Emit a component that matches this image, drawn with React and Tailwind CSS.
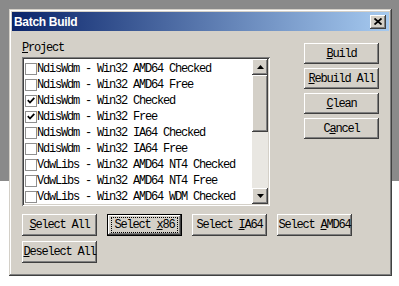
import React from 'react';

const raised =
  'shadow-[inset_-1px_-1px_#404040,inset_1px_1px_#fff,inset_-2px_-2px_#808080,inset_2px_2px_#d4d0c8]';
const sunken =
  'shadow-[inset_1px_1px_#808080,inset_-1px_-1px_#fff,inset_2px_2px_#404040,inset_-2px_-2px_#d4d0c8]';
const mono = "font-['Liberation_Mono',monospace] text-[12px] tracking-[-1.2px]";

const rows = [
  { label: 'NdisWdm - Win32 AMD64 Checked', checked: false },
  { label: 'NdisWdm - Win32 AMD64 Free', checked: false },
  { label: 'NdisWdm - Win32 Checked', checked: true },
  { label: 'NdisWdm - Win32 Free', checked: true },
  { label: 'NdisWdm - Win32 IA64 Checked', checked: false },
  { label: 'NdisWdm - Win32 IA64 Free', checked: false },
  { label: 'VdwLibs - Win32 AMD64 NT4 Checked', checked: false },
  { label: 'VdwLibs - Win32 AMD64 NT4 Free', checked: false },
  { label: 'VdwLibs - Win32 AMD64 WDM Checked', checked: false },
];

const Btn = ({ children, h = 'h-[21px]', isDefault = false }) => (
  <div
    className={`relative flex ${h} w-[75px] shrink-0 items-center justify-center bg-[#d4d0c8] text-black whitespace-pre ${raised} ${mono} ${
      isDefault ? 'border border-black' : ''
    }`}
  >
    {children}
    {isDefault && <div className="absolute inset-x-[3px] inset-y-[2px] border border-dotted border-black" />}
  </div>
);

const U = ({ children }) => <span className="underline underline-offset-[1px]">{children}</span>;

const Check = ({ checked }) => (
  <span className="flex h-[12px] w-[12px] shrink-0 items-center justify-center border border-[#8f8f8f] bg-white">
    {checked && (
      <svg width="8" height="7" viewBox="0 0 8 7">
        <path d="M0.8 3.2 L3 5.5 L7.3 0.9" fill="none" stroke="#000" strokeWidth="1.8" />
      </svg>
    )}
  </span>
);

const Arrow = ({ down }) => (
  <div className={`flex h-[16px] w-[16px] items-center justify-center bg-[#d4d0c8] ${raised}`}>
    <svg width="7" height="4" viewBox="0 0 7 4">
      <path d={down ? 'M0 0 H7 L3.5 4 Z' : 'M0 4 H7 L3.5 0 Z'} fill="#000" />
    </svg>
  </div>
);

export default function App() {
  return (
    <div className="h-[286px] w-[399px] overflow-hidden bg-[linear-gradient(#8a8a8a_0_181px,#fff_181px)] pl-[9px] pt-[9px]">
      <div className="flex h-[267px] w-[383px] flex-col bg-[#d4d0c8] p-[3px] shadow-[inset_-1px_-1px_#404040,inset_1px_1px_#d4d0c8,inset_-2px_-2px_#808080,inset_2px_2px_#fff]">
        {/* title bar */}
        <div className="flex h-[19px] items-center justify-between bg-[linear-gradient(to_right,#0a246a,#a6caf0)] pl-[2px] pr-[3px]">
          <span className="font-['Liberation_Sans',Arial,sans-serif] text-[12px] font-bold tracking-[-0.3px] text-white">
            Batch Build
          </span>
          <div className={`flex h-[14px] w-[16px] items-center justify-center bg-[#d4d0c8] ${raised}`}>
            <svg width="8" height="7" viewBox="0 0 8 7">
              <path d="M0.5 0.5 L7.5 6.5 M7.5 0.5 L0.5 6.5" stroke="#000" strokeWidth="1.8" />
            </svg>
          </div>
        </div>

        <div className="flex flex-col pl-[10px] pt-[10px]">
          <div className="flex">
            <div className="flex w-[248px] flex-col">
              <div className={`h-[14px] leading-[14px] text-black ${mono}`}>
                <U>P</U>roject
              </div>
              <div className={`mt-[2px] flex h-[149px] bg-white p-[2px] ${sunken}`}>
                <div className="flex flex-1 flex-col pt-[1px]">
                  {rows.map((r) => (
                    <div key={r.label} className="flex h-[16px] items-center pl-[1px] pt-[1px]">
                      <Check checked={r.checked} />
                      <span className={`whitespace-pre text-black ${mono}`}>{r.label}</span>
                    </div>
                  ))}
                </div>
                <div className="flex w-[16px] flex-col">
                  <Arrow />
                  <div className={`h-[57px] bg-[#d4d0c8] ${raised}`} />
                  <div className="flex-1 bg-[#e9e7e2]" />
                  <Arrow down />
                </div>
              </div>
            </div>

            <div className="ml-[34px] mt-[2px] flex flex-col gap-[4px]">
              <Btn>
                <U>B</U>uild
              </Btn>
              <Btn>
                <U>R</U>ebuild All
              </Btn>
              <Btn>
                <U>C</U>lean
              </Btn>
              <Btn>
                C<U>a</U>ncel
              </Btn>
            </div>
          </div>

          <div className="mt-[8px] flex gap-[10px]">
            <Btn h="h-[22px]">
              <U>S</U>elect All
            </Btn>
            <Btn h="h-[22px]" isDefault>
              Select <U>x</U>86
            </Btn>
            <Btn h="h-[22px]">
              Select <U>I</U>A64
            </Btn>
            <Btn h="h-[22px]">
              Select <U>A</U>MD64
            </Btn>
          </div>

          <div className="mt-[5px] flex">
            <Btn h="h-[22px]">
              <U>D</U>eselect All
            </Btn>
          </div>
        </div>
      </div>
    </div>
  );
}
